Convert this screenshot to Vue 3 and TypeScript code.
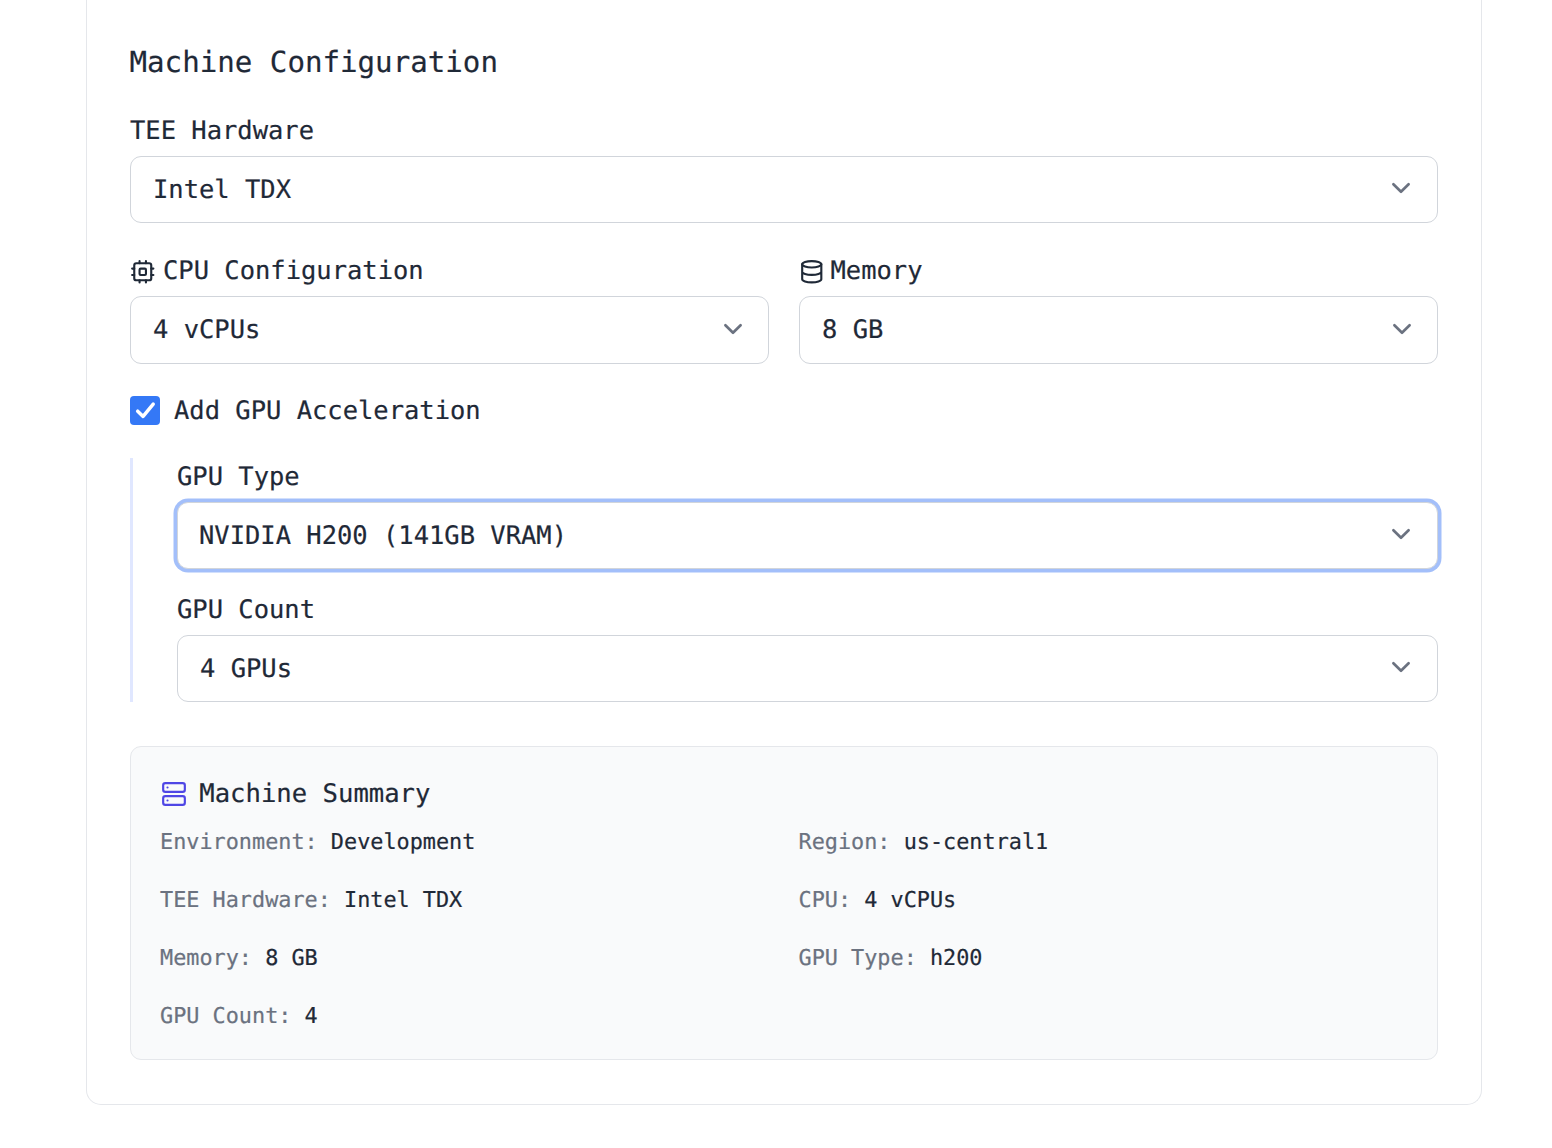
<script setup lang="ts">
import { computed, ref } from 'vue'

const tee = ref('Intel TDX')
const cpu = ref('4 vCPUs')
const memory = ref('8 GB')
const useGpu = ref(true)
const gpuType = ref('h200')
const gpuCount = ref(4)

const gpuNames: Record<string, string> = { h200: 'NVIDIA H200 (141GB VRAM)' }

interface SummaryItem {
  label: string
  value: string
}

const summary = computed<SummaryItem[]>(() => [
  { label: 'Environment', value: 'Development' },
  { label: 'Region', value: 'us-central1' },
  { label: 'TEE Hardware', value: tee.value },
  { label: 'CPU', value: cpu.value },
  { label: 'Memory', value: memory.value },
  { label: 'GPU Type', value: gpuType.value },
  { label: 'GPU Count', value: String(gpuCount.value) },
])
</script>

<template>
  <main class="card">
    <h2 class="heading">Machine Configuration</h2>

    <section class="field">
      <div class="label">TEE Hardware</div>
      <button class="select" type="button">
        <span>{{ tee }}</span>
        <svg class="chevron" viewBox="0 0 20 20"><path d="M6 8l4 4 4-4" /></svg>
      </button>
    </section>

    <div class="columns">
      <section class="field">
        <div class="label">
          <svg class="icon" viewBox="0 0 24 24">
            <rect x="4" y="4" width="16" height="16" rx="2" />
            <rect x="9" y="9" width="6" height="6" rx="1" />
            <path d="M15 2v2M15 20v2M2 15h2M2 9h2M20 15h2M20 9h2M9 2v2M9 20v2" />
          </svg>
          <span class="cpu-text">CPU Configuration</span>
        </div>
        <button class="select tall" type="button">
          <span>{{ cpu }}</span>
          <svg class="chevron" viewBox="0 0 20 20"><path d="M6 8l4 4 4-4" /></svg>
        </button>
      </section>
      <section class="field">
        <div class="label">
          <svg class="icon" viewBox="0 0 24 24">
            <ellipse cx="12" cy="5" rx="9" ry="3" />
            <path d="M3 5v14a9 3 0 0 0 18 0V5M3 12a9 3 0 0 0 18 0" />
          </svg>
          <span class="memory-text">Memory</span>
        </div>
        <button class="select tall" type="button">
          <span>{{ memory }}</span>
          <svg class="chevron" viewBox="0 0 20 20"><path d="M6 8l4 4 4-4" /></svg>
        </button>
      </section>
    </div>

    <div class="check-row" @click="useGpu = !useGpu">
      <span class="checkbox">
        <svg v-if="useGpu" viewBox="0 0 29 29"><path d="M7.7 15.2l5.4 5.2L23.2 8.2" /></svg>
      </span>
      <span class="check-text">Add GPU Acceleration</span>
    </div>

    <div v-if="useGpu" class="gpu">
      <section class="field">
        <div class="label">GPU Type</div>
        <button class="select focused" type="button">
          <span>{{ gpuNames[gpuType] }}</span>
          <svg class="chevron" viewBox="0 0 20 20"><path d="M6 8l4 4 4-4" /></svg>
        </button>
      </section>
      <section class="field">
        <div class="label">GPU Count</div>
        <button class="select" type="button">
          <span>{{ gpuCount }} GPUs</span>
          <svg class="chevron" viewBox="0 0 20 20"><path d="M6 8l4 4 4-4" /></svg>
        </button>
      </section>
    </div>

    <section class="summary">
      <h3 class="summary-title">
        <svg class="icon server" viewBox="0 0 24 24">
          <rect x="2" y="2" width="20" height="8" rx="2" />
          <rect x="2" y="14" width="20" height="8" rx="2" />
          <path d="M6 6h.01M6 18h.01" />
        </svg>
        <span>Machine Summary</span>
      </h3>
      <div class="summary-grid">
        <div v-for="item in summary" :key="item.label">
          <span class="muted">{{ item.label }}:</span> {{ item.value }}
        </div>
      </div>
    </section>
  </main>
</template>

<style>
body {
  margin: 0;
  background: #fff;
}
</style>

<style scoped>
* {
  box-sizing: border-box;
}

.card {
  width: 1396px;
  height: 1105px;
  margin-left: 86px;
  padding: 40px 43px 0;
  border: 1px solid #e5e7eb;
  border-top: 0;
  border-radius: 0 0 15px 15px;
  color: #1f2937;
  font-family: 'DejaVu Sans Mono', 'Liberation Mono', monospace;
  font-size: 25.47px;
  text-rendering: geometricPrecision;
  -webkit-text-stroke: 0.2px currentColor;
}

.heading {
  margin: 0 0 28px -0.5px;
  font-size: 29.15px;
  font-weight: 400;
  line-height: 44px;
}

.label {
  display: flex;
  align-items: center;
  height: 36px;
  margin-bottom: 8px;
  padding-top: 2px;
  line-height: 36px;
  white-space: pre;
}

.icon {
  flex: none;
  width: 25.5px;
  height: 25.5px;
  position: relative;
  top: 0.5px;
  fill: none;
  stroke: currentColor;
  stroke-width: 2;
  stroke-linecap: round;
  stroke-linejoin: round;
}

.cpu-text {
  margin-left: 7.5px;
}

.memory-text {
  margin-left: 6px;
}

.select {
  display: flex;
  align-items: center;
  justify-content: space-between;
  width: 100%;
  height: 67px;
  padding: 0 17px 0 22px;
  border: 1px solid #d1d5db;
  border-radius: 11px;
  background: #fff;
  color: inherit;
  font: inherit;
  text-align: left;
  text-rendering: inherit;
}

.select.tall {
  height: 68px;
}

.select.focused {
  padding-left: 21px;
  box-shadow: 0 0 0 3.5px #a3bffa;
}

.chevron {
  width: 38px;
  height: 38px;
  margin-bottom: 3px;
  fill: none;
  stroke: #6b7280;
  stroke-width: 1.4;
  stroke-linecap: round;
  stroke-linejoin: round;
}

.columns {
  display: grid;
  grid-template-columns: 1fr 1fr;
  gap: 30px;
  margin-top: 29px;
}

.columns .chevron {
  margin-right: -0.5px;
}

.check-row {
  display: flex;
  align-items: center;
  gap: 14px;
  height: 36px;
  margin-top: 28px;
}

.check-text {
  padding-top: 2px;
}

.checkbox {
  width: 30px;
  height: 29px;
  border-radius: 4px;
  background: #3478f6;
}

.checkbox svg {
  display: block;
  width: 29px;
  height: 29px;
  fill: none;
  stroke: #fff;
  stroke-width: 3.5;
  stroke-linecap: round;
  stroke-linejoin: round;
}

.gpu {
  display: flex;
  flex-direction: column;
  gap: 22px;
  margin-top: 30px;
  padding-left: 44px;
  border-left: 3px solid #e0e7ff;
}

.summary {
  height: 314px;
  margin-top: 44px;
  padding: 28px 29px 0;
  border: 1px solid #e5e7eb;
  border-radius: 11px;
  background: #f9fafb;
}

.summary-title {
  display: flex;
  align-items: center;
  gap: 12.5px;
  height: 36px;
  margin: 0 0 17px;
  padding-top: 2px;
  font-size: 25.6px;
  font-weight: 400;
}

.server {
  width: 26px;
  height: 26px;
  top: -0.2px;
  margin-left: 0.8px;
  color: #4f46e5;
}

.summary-grid {
  display: grid;
  grid-template-columns: 1fr 1fr;
  gap: 29px;
  font-size: 21.83px;
  line-height: 29px;
}

.muted {
  color: #6b7280;
}
</style>
